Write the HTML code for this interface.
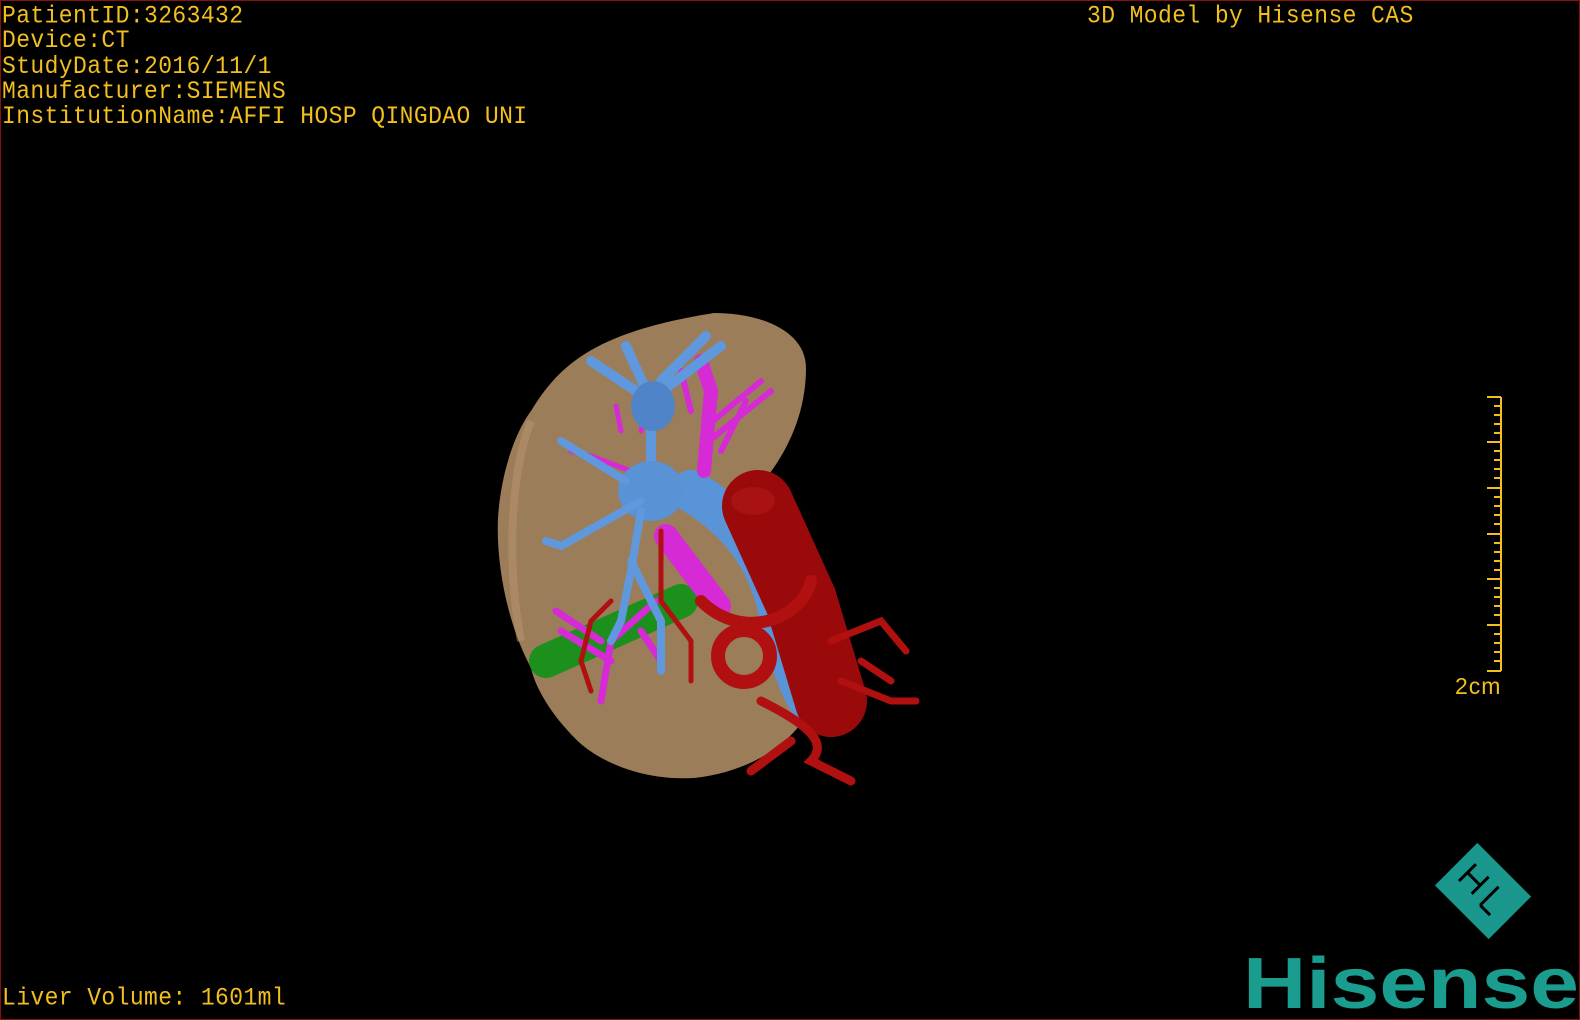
<!DOCTYPE html>
<html><head><meta charset="utf-8"><style>
html,body{margin:0;padding:0;background:#000;}
#c{position:relative;width:1580px;height:1020px;background:#000;box-sizing:border-box;border:1px solid #8a1010;overflow:hidden;font-family:"Liberation Mono","DejaVu Sans Mono",monospace;color:#f2bf1e;}
.t{position:absolute;font-size:23px;line-height:23.3px;white-space:pre;letter-spacing:0.4px;transform:scaleY(1.08);transform-origin:0 0;}
</style></head><body><div id="c">
<div class="t" style="left:1px;top:3px">PatientID:3263432
Device:CT
StudyDate:2016/11/1
Manufacturer:SIEMENS
InstitutionName:AFFI HOSP QINGDAO UNI</div>
<div class="t" style="left:1086px;top:3px">3D Model by Hisense CAS</div>
<div class="t" style="left:1px;top:985px">Liver Volume: 1601ml</div>
<svg width="1580" height="1020" style="position:absolute;left:0;top:0">
<path d="M713,312 C760,312 805,330 805,367 C805,400 795,440 763,480 L810,700 C805,730 760,770 693,777 C640,780 600,760 580,743 C555,720 535,690 530,667 C505,620 495,560 497,517 C500,470 515,430 530,410 C560,360 600,330 713,312 Z" fill="#9c7d59"/>
<path d="M530,420 C510,470 505,560 520,640" stroke="#b89670" stroke-width="8" fill="none" opacity=".5"/>
<path d="M545,660 L680,600" stroke="#1c8f1c" stroke-width="34" stroke-linecap="round"/>
<path d="M690,490 C740,520 770,560 780,620 C790,660 800,690 812,705" stroke="#5a94d8" stroke-width="42" fill="none" stroke-linecap="round"/>
<g stroke="#d62ad6" fill="none" stroke-linecap="round">
<path d="M665,535 L718,605" stroke-width="24"/>
<path d="M703,470 L710,390 L700,360" stroke-width="14"/>
<path d="M712,420 L760,380 M708,440 L770,390 M720,450 L745,400 M690,410 L680,370" stroke-width="6"/>
<path d="M630,470 L590,455 L570,450 M620,430 L615,405 M640,430 L645,410" stroke-width="5"/>
<path d="M655,600 L610,640 L600,700 M600,640 L555,610 M610,660 L560,630 M640,630 L660,660" stroke-width="7"/>
</g>
<g stroke="#5f98dc" fill="none" stroke-linecap="round">
<path d="M650,400 L590,360 M650,400 L625,345 M655,395 L720,345 M660,380 L705,335 M650,400 L650,470" stroke-width="10"/>
<ellipse cx="652" cy="405" rx="22" ry="25" fill="#4f85c8" stroke="none"/>
<ellipse cx="650" cy="490" rx="33" ry="30" fill="#5a92d6" stroke="none"/>
<path d="M640,500 L560,545 L545,540 M625,480 L560,440 M640,510 L630,570 L620,620 L610,640 M630,560 L660,620 L660,670" stroke-width="8"/>
</g>
<path d="M757,505 L800,600 L830,700" stroke="#9b0a0a" stroke-width="72" fill="none" stroke-linecap="round"/>
<ellipse cx="752" cy="500" rx="22" ry="14" fill="#a91212"/>
<g stroke="#b0100f" fill="none" stroke-linecap="round">
<circle cx="743" cy="655" r="26" stroke-width="14"/>
<path d="M700,600 C740,640 800,620 810,580" stroke-width="12"/>
<path d="M760,700 C800,720 830,740 810,760 L850,780 M790,740 L750,770" stroke-width="9"/>
<path d="M830,640 L880,620 L905,650 M840,680 L890,700 L915,700 M860,660 L890,680" stroke-width="7"/>
<path d="M660,530 L660,600 L690,640 L690,680 M610,600 L590,620 L580,660 L590,690" stroke-width="5"/>
</g>
<g stroke="#f2bf1e" stroke-width="2">
<path d="M1500,396 L1500,670"/>
<path d="M1486,396H1500M1486,670H1500M1486,441H1500M1486,487H1500M1486,533H1500M1486,578H1500M1486,624H1500"/>
<path d="M1493,405H1500M1493,414H1500M1493,423H1500M1493,432H1500M1493,450H1500M1493,459H1500M1493,468H1500M1493,477H1500M1493,496H1500M1493,505H1500M1493,514H1500M1493,523H1500M1493,542H1500M1493,551H1500M1493,560H1500M1493,569H1500M1493,587H1500M1493,596H1500M1493,605H1500M1493,614H1500M1493,633H1500M1493,642H1500M1493,651H1500M1493,660H1500"/>
</g>
<text x="1454" y="693" fill="#f2bf1e" font-family="Liberation Sans" font-size="23" letter-spacing="1">2cm</text>
<g transform="translate(1482,890) rotate(45)">
<rect x="-38" y="-30" width="76" height="60" fill="#1a978c"/>
<path d="M-24,-14 V10 M-24,-2 H-6 M-6,-14 V10 M8,-14 V12 M8,12 H22" stroke="#000" stroke-width="3" fill="none"/>
</g>
<text x="1242" y="1007" fill="#1a9d8e" font-family="Liberation Sans" font-weight="bold" font-size="72" textLength="336" lengthAdjust="spacingAndGlyphs">Hisense</text>
</svg>
</div></body></html>
